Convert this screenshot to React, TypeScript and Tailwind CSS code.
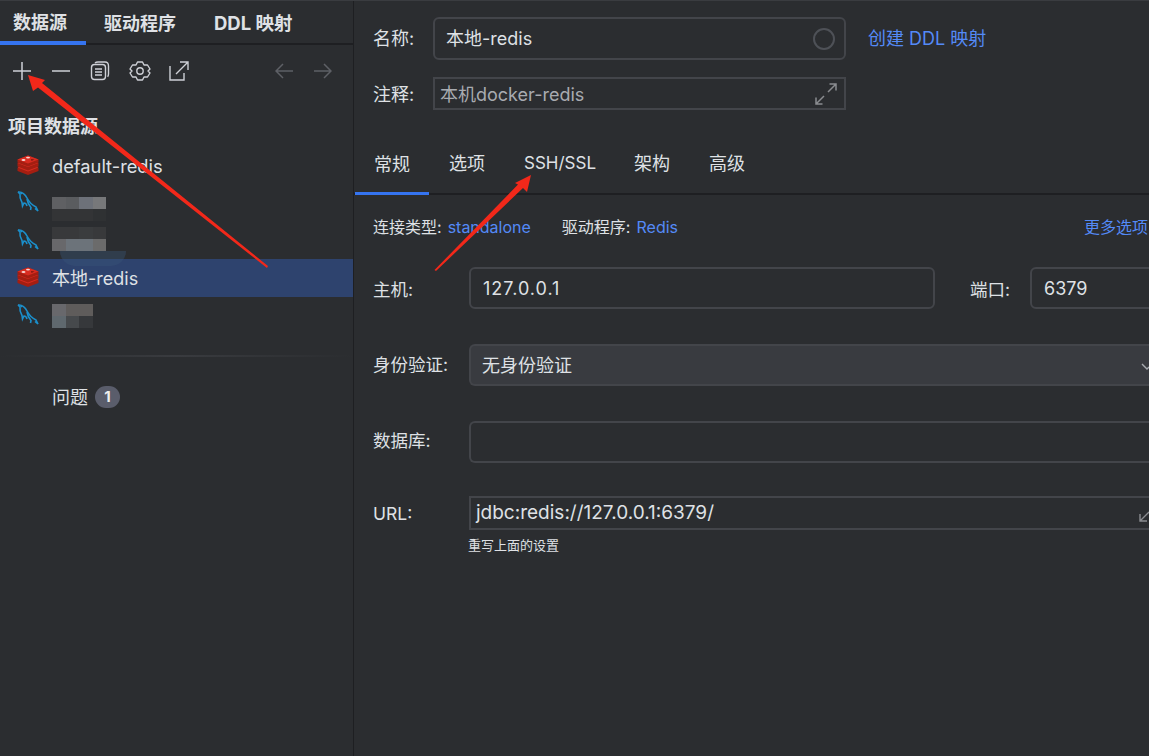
const font = "font-['Inter','Noto_Sans_CJK_SC',sans-serif]"

const RedisIcon = () => (
  <svg width="22" height="20" viewBox="0 0 22 20" className="shrink-0 -translate-y-[1px]">
    <path d="M0.5 13 L11 9 L21.5 13 V16 L11 20 L0.5 16 Z" fill="#a41e11" />
    <path d="M0.5 12.5 L11 8.5 L21.5 12.5 L11 16.5 Z" fill="#d82c20" />
    <path d="M0.5 8 L11 4 L21.5 8 V11.5 L11 15.5 L0.5 11.5 Z" fill="#a41e11" />
    <path d="M0.5 8 L11 4 L21.5 8 L11 12 Z" fill="#d82c20" />
    <path d="M0.5 4.5 L11 0.5 L21.5 4.5 V7.5 L11 11.5 L0.5 7.5 Z" fill="#a41e11" />
    <path d="M0.5 4.5 L11 0.5 L21.5 4.5 L11 8.5 Z" fill="#d82c20" />
    <ellipse cx="11" cy="2.6" rx="2" ry="0.9" fill="#f5d5d2" />
    <ellipse cx="6.5" cy="5" rx="2" ry="0.9" fill="#f5d5d2" />
    <path d="M14 4 L17.5 4.6 L14.5 6 Z" fill="#7a1710" />
  </svg>
)

const MysqlIcon = () => (
  <svg width="22" height="22" viewBox="0 0 22 22" fill="none" stroke="#1b8fcb" strokeWidth="1.6" className="shrink-0 -translate-y-[1px]">
    <path d="M1 1 C5 0.5 8 3 10 7 C12 11 15 14 19 16 L21 20 L18 17.5" />
    <path d="M1 1 L3 3 C2.5 6 3.5 9 5 11.5 L5.5 15 L7 12 C8.5 12 9.5 13 10 15" />
    <path d="M10 8 C10.5 11 11.5 14 14 16.5 L13.5 19" />
    <path d="M3.5 1.8 L5 2.8" />
  </svg>
)

const Blur = ({ colors, cols }: { colors: string[]; cols: number }) => (
  <div className={cols === 4 ? 'grid grid-cols-[repeat(4,13.5px)]' : 'grid grid-cols-[repeat(3,13.5px)]'}>
    {colors.map((c, i) => (
      <div key={i} className="h-[12px]" style={{ backgroundColor: c }} />
    ))}
  </div>
)

const Row = ({ icon, selected, children }: { icon: React.ReactNode; selected?: boolean; children: React.ReactNode }) => (
  <div className={`relative flex items-center pl-[17px] ${selected ? '-mt-[1px] h-[38.5px] bg-[#2e436e]' : 'h-[37.5px]'}`}>
    <div className="flex w-[35px] shrink-0">{icon}</div>
    {children}
  </div>
)

const Label = ({ children, className = '' }: { children: React.ReactNode; className?: string }) => (
  <div className={`shrink-0 text-[17.5px] text-[#dfe1e5] ${className}`}>{children}</div>
)

const Tools = () => (
  <div className="flex h-[52px] items-center pl-[12px] pr-[20px] text-[#ced0d6]">
    <svg width="20" height="20" viewBox="0 0 20 20" stroke="currentColor" strokeWidth="1.5" className="mr-[19px]"><path d="M10 1v18M1 10h18" /></svg>
    <svg width="20" height="20" viewBox="0 0 20 20" stroke="currentColor" strokeWidth="1.5" className="mr-[19px]"><path d="M1 10h18" /></svg>
    <svg width="20" height="20" viewBox="0 0 20 20" fill="none" stroke="currentColor" strokeWidth="1.4" className="mr-[19px]">
      <rect x="1.5" y="3.5" width="14" height="15" rx="3" />
      <path d="M5 2 C6 1 7 1 8 1 H15 C17.5 1 18.5 2.5 18.5 5 V13 C18.5 14 18.3 15 17.6 15.8" />
      <path d="M5 8h7M5 11h7M5 14h7" />
    </svg>
    <svg width="22" height="22" viewBox="0 0 22 22" fill="none" stroke="currentColor" strokeWidth="1.4" className="mr-[18px]">
      <path d="M8.5 2 H13.5 L15 5 L18.5 5 L21 9 L19 11 L21 13 L18.5 17 L15 17 L13.5 20 H8.5 L7 17 L3.5 17 L1 13 L3 11 L1 9 L3.5 5 L7 5 Z" strokeLinejoin="round" />
      <circle cx="11" cy="11" r="3.2" />
    </svg>
    <svg width="20" height="20" viewBox="0 0 20 20" fill="none" stroke="currentColor" strokeWidth="1.4">
      <path d="M1 5 V19 H15 V12" />
      <path d="M7 13 L19 1 M11 1 H19 V9" />
    </svg>
    <div className="ml-auto flex gap-[19px] pr-[1px] text-[#5e6066]">
      <svg width="19" height="16" viewBox="0 0 19 16" fill="none" stroke="currentColor" strokeWidth="1.5"><path d="M18 8H1M8 1 L1 8 L8 15" /></svg>
      <svg width="19" height="16" viewBox="0 0 19 16" fill="none" stroke="currentColor" strokeWidth="1.5"><path d="M1 8H18M11 1 L18 8 L11 15" /></svg>
    </div>
  </div>
)

export default function App() {
  return (
    <div className={`relative flex h-[756px] w-[1149px] overflow-hidden border-t border-[#3a3c40] bg-[#2b2d30] ${font}`}>
      {/* left panel */}
      <aside className="w-[354px] shrink-0 border-r border-[#1e1f22]">
        <div className="flex h-[44px] items-end border-b-[2px] border-[#1e1f22] text-[18px] font-bold text-[#dfe1e5]">
          <div className="-mb-[2px] flex h-[44px] w-[86px] items-center border-b-[4px] border-[#3574f0] pl-[13px] pt-[3px]">数据源</div>
          <div className="flex h-[42px] w-[128px] items-center pl-[18px] pt-[3px]">驱动程序</div>
          <div className="flex h-[42px] items-center pt-[3px] text-[18.5px]">DDL 映射</div>
        </div>
        <Tools />
        <div className="mt-[16px] pl-[8px] text-[18px] font-bold text-[#dfe1e5]">项目数据源</div>
        <div className="mt-[7px]">
          <Row icon={<RedisIcon />}><span className="pt-[2px] text-[18.3px] text-[#dfe1e5]">default-redis</span></Row>
          <Row icon={<MysqlIcon />}>
            <div className="mb-[-12px]"><Blur cols={4} colors={['#5f6063', '#5a5c5f', '#6d7179', '#77787a', '#333436', '#333436', '#333436', '#2f3133']} /></div>
          </Row>
          <Row icon={<MysqlIcon />}>
            <div className="mt-[-4px]"><Blur cols={4} colors={['#38393b', '#38393b', '#3a3c3e', '#38393b', '#68686b', '#6c737a', '#6c737a', '#6b6b6b']} /></div>
          </Row>
          <Row icon={<RedisIcon />} selected><span className="pt-[2px] text-[18px] text-[#dfe1e5]">本地-redis</span></Row>
          <Row icon={<MysqlIcon />}>
            <Blur cols={3} colors={['#68686c', '#5f5c5b', '#5f5c5b', '#5f686e', '#46494c', '#36383b']} />
          </Row>
        </div>
        <div className="mt-[20px] h-[2px] bg-gradient-to-r from-[#2b2d30] via-[#393b3f] to-[#2b2d30]" />
        <div className="mt-[27px] flex items-center pl-[52px]">
          <span className="text-[18px] text-[#dfe1e5]">问题</span>
          <span className="ml-[7px] flex h-[22px] w-[25px] items-center justify-center rounded-full bg-[#5a5d6b] text-[15px] font-bold text-[#eeeeee]">1</span>
        </div>
      </aside>

      {/* right panel */}
      <main className="min-w-0 flex-1 overflow-hidden">
        <div className="ml-[19px] mt-[16px] flex items-center">
          <Label className="w-[60px] text-[18px]">名称:</Label>
          <div className="flex h-[43px] w-[413px] shrink-0 items-center justify-between rounded-[6px] border-[2px] border-[#43454a] pl-[11px] pr-[9px] text-[18px] text-[#dfe1e5]">
            本地-redis
            <div className="h-[22px] w-[22px] rounded-full border-[2px] border-[#4e5157]" />
          </div>
          <span className="ml-[22px] text-[18px] text-[#548af7]">创建 DDL 映射</span>
        </div>
        <div className="ml-[19px] mt-[17px] flex items-center">
          <Label className="w-[60px] pt-[1px] text-[18px]">注释:</Label>
          <div className="flex h-[33px] w-[413px] shrink-0 items-center justify-between border-[2px] border-[#43454a] pl-[5px] pr-[6px] pt-[1px] text-[18px] text-[#a8abb0]">
            本机docker-redis
            <svg width="24" height="24" viewBox="0 0 24 24" fill="none" stroke="#8a8c90" strokeWidth="1.5">
              <path d="M14 10 L22 2 M15.5 2 H22 V8.5 M2 22 L10 14 M2 15.5 V22 H8.5" />
            </svg>
          </div>
        </div>

        <div className="mt-[35px] flex h-[50px] border-b-[2px] border-[#1e1f22] pl-[1px] text-[18px] text-[#dfe1e5]">
          <div className="-mb-[2px] flex h-[50px] w-[74px] items-center justify-center border-b-[3px] border-[#3574f0] pb-[9px]"><span>常规</span></div>
          <div className="flex items-center pb-[11px] pl-[20px]">选项</div>
          <div className="flex items-center pb-[11px] pl-[39px] text-[17px]">SSH/SSL</div>
          <div className="flex items-center pb-[11px] pl-[38px]">架构</div>
          <div className="flex items-center pb-[11px] pl-[39px]">高级</div>
        </div>

        <div className="mt-[20px] flex items-center pl-[19px] pr-[1px] text-[16px]">
          <span className="text-[#dfe1e5]">连接类型:</span>
          <span className="ml-[6px] text-[#548af7]">standalone</span>
          <span className="ml-[31px] text-[#dfe1e5]">驱动程序:</span>
          <span className="ml-[6px] text-[#548af7]">Redis</span>
          <span className="ml-auto text-[#548af7]">更多选项</span>
        </div>

        <div className="mt-[28px] flex items-center pl-[19px]">
          <Label className="w-[96px] pt-[5px]">主机:</Label>
          <div className="flex h-[42px] w-[466px] shrink-0 items-center rounded-[6px] border-[2px] border-[#43454a] pl-[12px] text-[18px] tracking-[1px] text-[#dfe1e5]">127.0.0.1</div>
          <Label className="ml-[35px] w-[60px] pt-[5px]">端口:</Label>
          <div className="flex h-[42px] w-[140px] shrink-0 items-center rounded-l-[6px] border-[2px] border-[#43454a] pl-[12px] text-[18px] text-[#dfe1e5]">6379</div>
        </div>

        <div className="mt-[35px] flex items-center pl-[19px]">
          <Label className="w-[96px]">身份验证:</Label>
          <div className="flex h-[42px] flex-1 items-center justify-between rounded-l-[6px] border-y-[2px] border-l-[2px] border-[#43454a] bg-[#393b40] pl-[11px] text-[18px] text-[#dfe1e5]">
            无身份验证
            <svg width="8" height="8" viewBox="0 0 8 8" fill="none" stroke="#a8abb0" strokeWidth="1.4" className="mt-[1px]"><path d="M1 2 L6 7 L8 5" /></svg>
          </div>
        </div>

        <div className="mt-[35px] flex items-center pl-[19px]">
          <Label className="w-[96px] pb-[2px]">数据库:</Label>
          <div className="h-[42px] flex-1 rounded-l-[6px] border-y-[2px] border-l-[2px] border-[#43454a]" />
        </div>

        <div className="mt-[33px] flex items-center pl-[19px]">
          <Label className="w-[96px] pt-[2px]">URL:</Label>
          <div className="flex h-[34px] flex-1 items-center justify-between border-y-[2px] border-l-[2px] border-[#43454a] pl-[5px] pt-[1px] text-[19px] text-[#dfe1e5]">
            jdbc:redis://127.0.0.1:6379/
            <svg width="10" height="12" viewBox="0 0 10 12" fill="none" stroke="#8a8c90" strokeWidth="1.4" className="mt-[4px]"><path d="M1 11 L10 2 M1 4 V11 H8" /></svg>
          </div>
        </div>
        <div className="ml-[114px] mt-[6px] text-[13px] text-[#dfe1e5]">重写上面的设置</div>
      </main>

      {/* smudge left by the redaction, and the annotation arrows */}
      <div className="pointer-events-none absolute left-[60px] top-[250px] h-[15px] w-[66px] rounded-b-[40px] bg-[#3a5478]/40" />
      <svg width="1149" height="756" viewBox="0 0 1149 756" className="pointer-events-none absolute left-0 top-[-1px]">
        <path d="M28 75 L45 80 L42 83 L268 266 L267 268 L38 87.5 L33 91 Z" fill="#f2281a" />
        <path d="M531 175 L527 192 L523 188 L436 271 L434.5 270 L518 184.5 L515 183 Z" fill="#f2281a" />
      </svg>
    </div>
  )
}
